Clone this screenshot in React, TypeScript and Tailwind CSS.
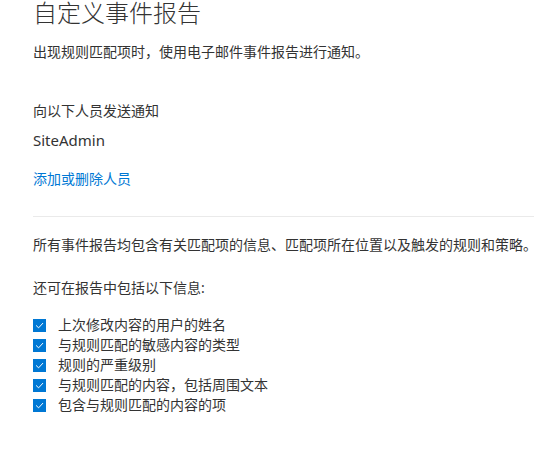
import React from "react";

const items = [
  "上次修改内容的用户的姓名",
  "与规则匹配的敏感内容的类型",
  "规则的严重级别",
  "与规则匹配的内容，包括周围文本",
  "包含与规则匹配的内容的项",
];

function Check() {
  return (
    <span className="flex h-[13px] w-[13px] shrink-0 items-center justify-center bg-[#0078d4]">
      <svg width="9" height="9" viewBox="0 0 10 10" fill="none">
        <path d="M1.5 5.2 L4 7.6 L8.6 2.6" stroke="#ffffff" strokeWidth="1.1" strokeLinecap="round" strokeLinejoin="round" />
      </svg>
    </span>
  );
}

export default function App() {
  return (
    <div
      className="min-h-[449px] w-[534px] bg-white pl-[33px] text-[#333333]"
      style={{ fontFamily: '"Segoe UI", "Noto Sans", "Noto Sans CJK SC", sans-serif' }}
    >
      <h1 className="text-[24px] font-light leading-[26px] text-[#333333]">自定义事件报告</h1>
      <p className="mt-[16px] text-[14px] leading-[20px]">出现规则匹配项时，使用电子邮件事件报告进行通知。</p>
      <p className="mt-[39px] text-[14px] leading-[20px]">向以下人员发送通知</p>
      <p className="mt-[9px] text-[15px] leading-[20px]">SiteAdmin</p>
      <p className="mt-[19px] text-[14px] leading-[20px] text-[#0078d4]">添加或删除人员</p>
      <div className="mt-[27px] border-t border-[#eaeaea]" />
      <p className="mt-[18px] whitespace-nowrap text-[14px] leading-[20px]">
        所有事件报告均包含有关匹配项的信息、匹配项所在位置以及触发的规则和策略。
      </p>
      <p className="mt-[23px] text-[14px] leading-[20px]">还可在报告中包括以下信息:</p>
      <ul className="mt-[17px] flex flex-col">
        {items.map((t) => (
          <li key={t} className="flex h-[20px] items-center gap-[12px] text-[14px] leading-[20px]">
            <Check />
            <span>{t}</span>
          </li>
        ))}
      </ul>
    </div>
  );
}
